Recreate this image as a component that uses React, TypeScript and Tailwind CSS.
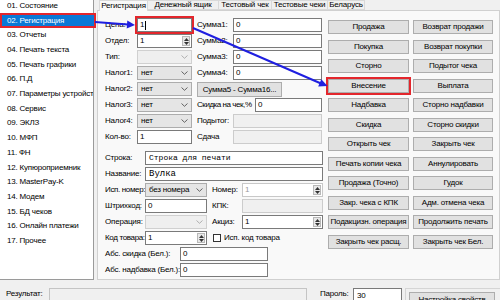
import React from "react";

const inputCls =
  "h-[14px] bg-white border border-[#7a7a7a] flex items-center pl-[2px] leading-none overflow-hidden whitespace-nowrap";
const greyCls = "h-[14px] bg-[#f0f0f0] border border-[#cccccc]";
const comboCls =
  "h-[14px] bg-[#e5e5e5] border border-[#acacac] flex items-center justify-between pl-[3px] pr-[3px] leading-none whitespace-nowrap";
const comboDisCls =
  "h-[14px] bg-[#efefef] border border-[#d0d0d0] flex items-center justify-end pr-[3px]";
const btnCls =
  "h-[14px] bg-[#e1e1e1] border border-[#adadad] flex items-center justify-center leading-none whitespace-nowrap";
const lblCls = "flex items-center leading-none whitespace-nowrap h-[14px]";

const Chevron = ({ grey }: { grey?: boolean }) => (
  <svg width="7" height="4" viewBox="0 0 7 4" className="shrink-0">
    <path
      d="M0.5 0.5 L3.5 3.3 L6.5 0.5"
      fill="none"
      stroke={grey ? "#a8a8a8" : "#555"}
      strokeWidth="0.9"
    />
  </svg>
);

const Spin = () => (
  <div className="w-[8px] h-[10px] mr-[1px] flex flex-col items-center justify-center gap-[1px] bg-[#e8e8e8] border border-[#b8b8b8] shrink-0">
    <svg width="5" height="3" viewBox="0 0 5 3">
      <path d="M0 3 L2.5 0 L5 3Z" fill="#333" />
    </svg>
    <svg width="5" height="3" viewBox="0 0 5 3">
      <path d="M0 0 L2.5 3 L5 0Z" fill="#333" />
    </svg>
  </div>
);

const Lbl = ({ children }: { children: React.ReactNode }) => (
  <div className={lblCls}>{children}</div>
);

const Combo = ({ v }: { v: string }) => (
  <div className={comboCls}>
    <span>{v}</span>
    <Chevron />
  </div>
);

const ComboDis = () => (
  <div className={comboDisCls}>
    <Chevron grey />
  </div>
);

const SpinInput = ({ v, dis }: { v: string; dis?: boolean }) => (
  <div className={inputCls + " justify-between " + (dis ? "text-[#9a9a9a] border-[#c8c8c8]" : "")}>
    <span>{v}</span>
    <Spin />
  </div>
);

const listItems = [
  "01. Состояние",
  "02. Регистрация",
  "03. Отчеты",
  "04. Печать текста",
  "05. Печать графики",
  "06. П.Д",
  "07. Параметры устройства",
  "08. Сервис",
  "09. ЭКЛЗ",
  "10. МФП",
  "11. ФН",
  "12. Купюроприемник",
  "13. MasterPay-K",
  "14. Модем",
  "15. БД чеков",
  "16. Онлайн платежи",
  "17. Прочее",
];

const btnsLeft = [
  "Продажа",
  "Покупка",
  "Сторно",
  "Внесение",
  "Надбавка",
  "Скидка",
  "Открыть чек",
  "Печать копии чека",
  "Продажа (Точно)",
  "Закр. чека с КПК",
  "Подакцизн. операция",
  "Закрыть чек расщ.",
];
const btnsRight = [
  "Возврат продажи",
  "Возврат покупки",
  "Подытог чека",
  "Выплата",
  "Сторно надбавки",
  "Сторно скидки",
  "Закрыть чек",
  "Аннулировать",
  "Гудок",
  "Адм. отмена чека",
  "Продолжить печать",
  "Закрыть чек Бел.",
];

export default function App() {
  const buttons: React.ReactNode[] = [];
  btnsLeft.forEach((b, i) => {
    buttons.push(
      <div
        key={"l" + i}
        className={btnCls + (b === "Внесение" ? " ring-2 ring-[#e3262c]" : "")}
      >
        {b}
      </div>
    );
    buttons.push(
      <div key={"r" + i} className={btnCls}>
        {btnsRight[i]}
      </div>
    );
  });

  return (
    <div className="relative w-[500px] h-[300px] overflow-hidden bg-[#f0f0f0] text-black text-[8px] tracking-[-0.2px] font-['Liberation_Sans',Arial,sans-serif]">
      <div className="flex h-[280px]">
        {/* Left list */}
        <div className="w-[94px] h-full bg-white border-r border-b border-[#9a9a9a] relative z-10">
          <div className="-mt-[1.7px]">
            {listItems.map((it, i) =>
              i === 1 ? (
                <div
                  key={it}
                  className="h-[15px] w-[96px] bg-[#0a78d6] text-white flex items-center pl-[7px] ring-2 ring-inset ring-[#e3262c] whitespace-nowrap"
                >
                  {it}
                </div>
              ) : (
                <div
                  key={it}
                  className="h-[14.7px] flex items-center pl-[7px] whitespace-nowrap overflow-hidden"
                >
                  {it}
                </div>
              )
            )}
          </div>
        </div>

        {/* Tab control */}
        <div className="ml-[3px] flex-1 flex flex-col">
          <div className="flex items-end h-[10px] pl-[2px]">
            <div className="w-[49px] h-[11px] -mb-px relative z-10 bg-[#f9f9f9] border border-b-0 border-[#d9d9d9] flex items-center justify-center">
              Регистрация
            </div>
            <div className="w-[71px] h-[10px] bg-[#f0f0f0] border border-l-0 border-[#d9d9d9] flex items-center justify-center">
              Денежный ящик
            </div>
            <div className="w-[53px] h-[10px] bg-[#f0f0f0] border border-l-0 border-[#d9d9d9] flex items-center justify-center">
              Тестовый чек
            </div>
            <div className="w-[56px] h-[10px] bg-[#f0f0f0] border border-l-0 border-[#d9d9d9] flex items-center justify-center">
              Тестовые чеки
            </div>
            <div className="w-[37px] h-[10px] bg-[#f0f0f0] border border-l-0 border-[#d9d9d9] flex items-center justify-center">
              Беларусь
            </div>
          </div>
          <div className="flex-1 bg-[#f9f9f9] border border-[#d0d0d0] flex pl-[7px] pt-[7px]">
            {/* Left form block */}
            <div className="w-[218px] flex flex-col">
              <div className="grid grid-cols-[32px_55px_5px_36px_89px] auto-rows-[14px] gap-y-[2px]">
                <Lbl>Цена:</Lbl>
                <div className={inputCls + " ring-2 ring-[#e3262c]"}>
                  1<span className="w-px h-[9px] bg-black ml-px" />
                </div>
                <div />
                <Lbl>Сумма1:</Lbl>
                <div className={inputCls}>0</div>

                <Lbl>Отдел:</Lbl>
                <SpinInput v="1" />
                <div />
                <Lbl>Сумма2:</Lbl>
                <div className={inputCls}>0</div>

                <Lbl>Тип:</Lbl>
                <ComboDis />
                <div />
                <Lbl>Сумма3:</Lbl>
                <div className={inputCls}>0</div>

                <Lbl>Налог1:</Lbl>
                <Combo v="нет" />
                <div />
                <Lbl>Сумма4:</Lbl>
                <div className={inputCls}>0</div>

                <Lbl>Налог2:</Lbl>
                <Combo v="нет" />
                <div />
                <div className="col-span-2 flex">
                  <div className={btnCls + " w-[85px] h-[15px]"}>Сумма5 - Сумма16...</div>
                </div>

                <Lbl>Налог3:</Lbl>
                <Combo v="нет" />
                <div />
                <div className="col-span-2 flex">
                  <div className={lblCls + " w-[58px] tracking-[-0.45px]"}>Скидка на чек,%</div>
                  <div className={inputCls + " w-[67px]"}>0</div>
                </div>

                <Lbl>Налог4:</Lbl>
                <Combo v="нет" />
                <div />
                <Lbl>Подытог:</Lbl>
                <div className={greyCls} />

                <Lbl>Кол-во:</Lbl>
                <div className={inputCls}>1</div>
                <div />
                <Lbl>Сдача</Lbl>
                <div className={greyCls} />
              </div>

              <div className="mt-[7px] grid grid-cols-[40px_62px_5px_30px_81px] auto-rows-[14px] gap-y-[2px]">
                <Lbl>Строка:</Lbl>
                <div className={inputCls + " col-span-4 pl-[3px] text-[8px] tracking-normal font-['Liberation_Mono',monospace]"}>
                  Строка для печати
                </div>

                <Lbl>Название:</Lbl>
                <div className={inputCls + " col-span-4 pl-[3px] text-[9px] tracking-normal font-['Liberation_Mono',monospace]"}>
                  Вулка
                </div>

                <div className={lblCls + " tracking-[-0.35px]"}>Исп. номер:</div>
                <Combo v="без номера" />
                <div />
                <Lbl>Номер:</Lbl>
                <SpinInput v="1" dis />

                <Lbl>Штрихкод:</Lbl>
                <div className={inputCls}>0</div>
                <div />
                <Lbl>КПК:</Lbl>
                <div className={greyCls} />

                <Lbl>Операция:</Lbl>
                <ComboDis />
                <div />
                <Lbl>Акциз:</Lbl>
                <SpinInput v="1" />

                <div className={lblCls + " tracking-[-0.35px]"}>Код товара:</div>
                <SpinInput v="1" />
                <div />
                <div className="col-span-2 flex items-center gap-[3px] pl-px">
                  <div className="w-[8px] h-[8px] bg-white border border-[#333]" />
                  <span className="leading-none whitespace-nowrap">Исп. код товара</span>
                </div>

                <div className="col-span-5 flex">
                  <div className={lblCls + " w-[75px]"}>Абс. скидка (Бел.):</div>
                  <div className={inputCls + " w-[88px]"}>0</div>
                </div>

                <div className="col-span-5 flex">
                  <div className={lblCls + " w-[75px]"}>Абс. надбавка (Бел.):</div>
                  <div className={inputCls + " w-[88px]"}>0</div>
                </div>
              </div>
            </div>

            {/* Buttons */}
            <div className="ml-[5px] mt-[2px] grid grid-cols-[81px_80px] gap-x-[4px] gap-y-[5.5px] auto-rows-[14px] content-start">
              {buttons}
            </div>
          </div>
        </div>
      </div>

      {/* Bottom bar */}
      <div className="flex h-[20px]">
        <div className="ml-[6px] w-[43px] mt-[10px] leading-none whitespace-nowrap">Результат:</div>
        <div className="w-[258px] h-[16px] mt-[8px] bg-[#f0f0f0] border border-[#c4c4c4]" />
        <div className="ml-[13px] w-[33px] mt-[10px] leading-none whitespace-nowrap">Пароль:</div>
        <div className="w-[49px] h-[16px] mt-[8px] bg-white border border-[#7a7a7a] pl-[3px] pt-[3px] leading-none">
          30
        </div>
        <div className="ml-[3px] flex-1 mt-[8px] border-l border-t border-[#d5d5d5] pl-[3px] pt-[3px]">
          <div className={btnCls + " w-[86px] h-[16px] items-start pt-[3px]"}>Настройка свойств</div>
        </div>
      </div>

      {/* Blue arrows overlay */}
      <svg
        className="absolute inset-0 pointer-events-none z-20"
        width="500"
        height="300"
        viewBox="0 0 500 300"
      >
        <line x1="95" y1="22" x2="128" y2="24.5" stroke="#1f1fe0" strokeWidth="2" />
        <polygon points="135,25 126.7,28.4 127.3,20.6" fill="#1f1fe0" />
        <line x1="193" y1="28" x2="321" y2="83.5" stroke="#1f1fe0" strokeWidth="2" />
        <polygon points="327.5,86 318.2,86.6 321.3,79.2" fill="#1f1fe0" />
      </svg>
    </div>
  );
}
